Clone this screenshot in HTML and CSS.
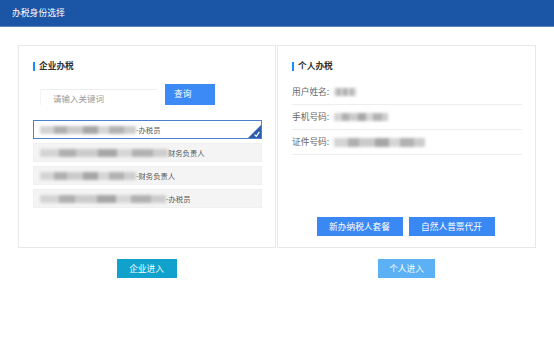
FILE: index.html
```html
<!DOCTYPE html>
<html lang="zh">
<head>
<meta charset="utf-8">
<title>办税身份选择</title>
<link rel="stylesheet" href="styles.css">
</head>
<body>
<header class="topbar"><span class="topbar-title">办税身份选择</span></header>
<main class="layout">
  <section class="col">
    <div class="panel panel-corp">
      <h2 class="panel-title">企业办税</h2>
      <div class="search">
        <input class="search-input" type="text" placeholder="请输入关键词">
        <button class="btn btn-search">查询</button>
      </div>
      <ul class="list">
        <li class="item item-active"><span class="blur blur-a"></span><span class="role">-办税员</span>
          <svg class="corner" width="13" height="13" viewBox="0 0 13 13"><polygon points="13,0 13,13 0,13" fill="#2b5fae"/><path d="M6.5 9.6 L8.3 11.3 L11.4 6.8" stroke="#fff" stroke-width="1.2" fill="none"/></svg>
        </li>
        <li class="item"><span class="blur blur-b"></span><span class="role">财务负责人</span></li>
        <li class="item"><span class="blur blur-c"></span><span class="role">-财务负责人</span></li>
        <li class="item"><span class="blur blur-d"></span><span class="role">-办税员</span></li>
      </ul>
    </div>
    <button class="enter enter-corp">企业进入</button>
  </section>
  <section class="col">
    <div class="panel panel-person">
      <h2 class="panel-title">个人办税</h2>
      <div class="info">
        <div class="info-row"><span class="label">用户姓名:</span><span class="blur blur-name"></span></div>
        <div class="info-row"><span class="label">手机号码:</span><span class="blur blur-phone"></span></div>
        <div class="info-row"><span class="label">证件号码:</span><span class="blur blur-id"></span></div>
      </div>
      <div class="actions">
        <button class="btn btn-action">新办纳税人套餐</button>
        <button class="btn btn-action">自然人普票代开</button>
      </div>
    </div>
    <button class="enter enter-person">个人进入</button>
  </section>
</main>
</body>
</html>
```
FILE: styles.css
```css
* { box-sizing: border-box; }
html, body { margin: 0; padding: 0; background: #fff; }
body {
  font-family: "Noto Sans CJK SC", "Noto Sans", sans-serif;
  font-size: 8.7px;
  color: #333;
  width: 554px;
  height: 347px;
  overflow: hidden;
}
.topbar {
  height: 27px;
  background: #1b55a5;
  border-bottom: 1px solid #5784c2;
  padding-left: 12px;
  display: flex;
  align-items: center;
}
.topbar-title { color: #fff; font-size: 8.8px; line-height: 12px; }

.layout {
  display: grid;
  grid-template-columns: 258px 259px;
  column-gap: 1px;
  padding: 18px 0 0 18px;
}
.col { display: flex; flex-direction: column; align-items: center; }
.panel {
  width: 100%;
  height: 203px;
  border: 1px solid #e8e8e8;
  display: flex;
  flex-direction: column;
}
.panel-corp { padding: 14px 13px 0 14px; }
.panel-person { padding: 14px 13px 11px 14px; }
.panel-title {
  margin: 0;
  font-size: 8.7px;
  font-weight: bold;
  line-height: 12px;
  color: #333;
  display: flex;
  align-items: center;
}
.panel-title::before {
  content: "";
  width: 2px;
  height: 9px;
  background: #1a8cff;
  margin-right: 4px;
}

.search { display: flex; align-items: flex-end; margin-top: 12px; padding-left: 7px; height: 21px; }
.search-input {
  width: 117px;
  height: 16px;
  border: none;
  border-top: 1px solid #eee;
  border-left: 1px solid #f3f3f3;
  padding: 0 0 0 12px;
  font-family: inherit;
  font-size: 8.5px;
  outline: none;
  background: #fff;
}
.search-input::placeholder { color: #999; }
.btn {
  border: none;
  color: #fff;
  font-family: inherit;
  font-size: 8.7px;
  padding: 0;
  cursor: pointer;
}
.btn-search {
  margin-left: 8px;
  width: 50px;
  height: 21px;
  background: #3b8af6;
  text-align: left;
  padding-left: 9px;
  padding-bottom: 2px;
}

.list { list-style: none; margin: 15px 0 0; padding: 0; display: flex; flex-direction: column; gap: 4px; }
.item {
  position: relative;
  height: 19px;
  background: #f4f4f4;
  border: 1px solid #f0f0f0;
  display: flex;
  align-items: center;
  padding-left: 6px;
  font-size: 7.3px;
  color: #555;
}
.item-active { background: #fff; border-color: #4d7fcf; }
.corner { position: absolute; right: 0; bottom: 0; }
.role { line-height: 10px; }

.blur {
  display: inline-block;
  height: 8px;
  filter: blur(1.4px);
  background: linear-gradient(90deg, #d4d4d4 0 15%, #b0b0b0 15% 28%, #cbcbcb 28% 45%, #a6a6a6 45% 60%, #d6d6d6 60% 72%, #b2b2b2 72% 88%, #cdcdcd 88% 100%);
}
.blur-a { width: 96px; }
.blur-b { width: 128px; }
.blur-c { width: 96px; }
.blur-d { width: 126px; }

.info { margin-top: 8px; }
.info-row {
  height: 25px;
  border-bottom: 1px solid #eee;
  display: flex;
  align-items: center;
  color: #666;
}
.label { line-height: 12px; margin-right: 5px; }
.blur-name { width: 22px; }
.blur-phone { width: 54px; }
.blur-id { width: 91px; height: 9px; }

.actions { margin-top: auto; display: flex; justify-content: center; gap: 6px; padding-right: 3px; }
.btn-action { width: 86px; height: 19px; background: #3a88f3; }

.enter {
  margin-top: 11px;
  height: 19px;
  border: none;
  color: #fff;
  font-family: inherit;
  font-size: 8.7px;
  padding: 0;
}
.enter-corp { width: 60px; background: #10a2cd; margin-right: 1px; }
.enter-person { width: 57px; background: #5cb0f4; }
```
